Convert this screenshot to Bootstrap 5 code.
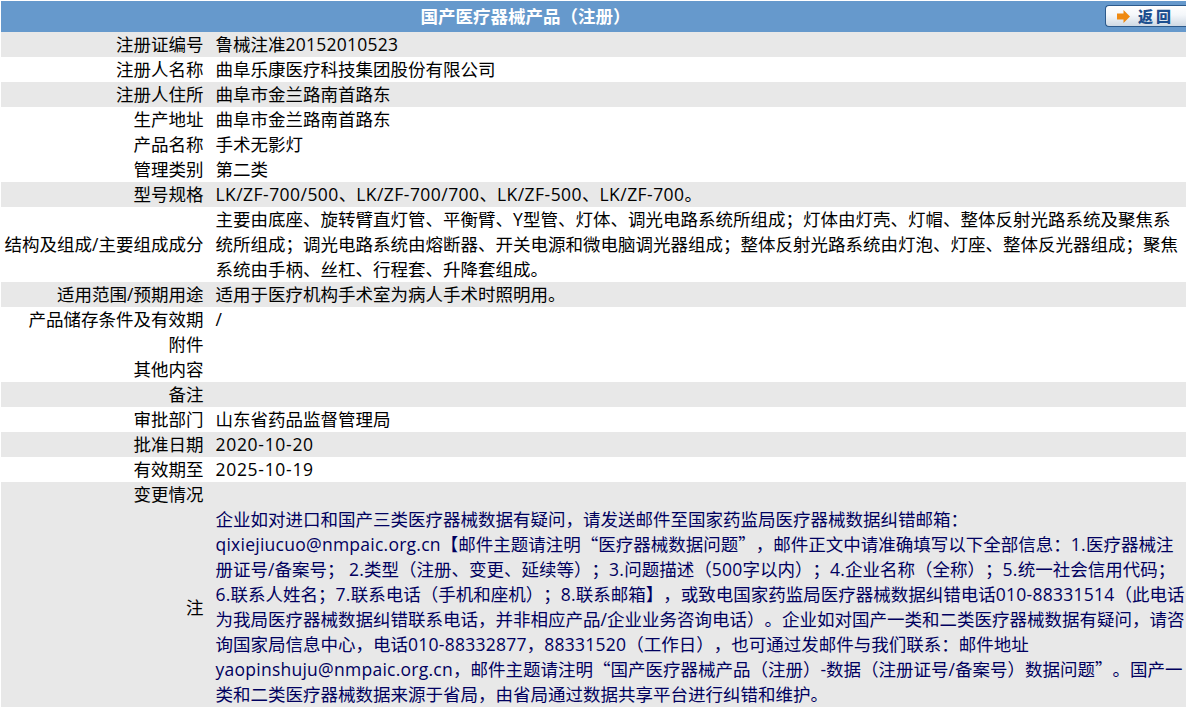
<!DOCTYPE html>
<html lang="zh-CN">
<head>
<meta charset="utf-8">
<title>国产医疗器械产品（注册）</title>
<link href="https://cdn.jsdelivr.net/npm/bootstrap@5.3.0/dist/css/bootstrap.min.css" rel="stylesheet">
<style>
html,body{height:707px;overflow:hidden;background:#fff}
body{font-family:"Open Sans","Noto Sans CJK SC",sans-serif;font-size:17.5px;color:#000;padding:1px 0 0 1px;text-spacing-trim:space-all}
.head-bar{background:#6699cc;height:31px}
.head-title{width:1049px;color:#fff;font-weight:700;font-size:17.5px;line-height:31px;text-align:center}
.back-btn{width:81px;height:22px;margin:4px 0 0 55px;padding:0 0 0 11px;border:1px solid #2c5a8c;border-right-width:0;border-radius:4px 0 0 4px;background:linear-gradient(#ffffff,#f4f7fa 45%,#cfd9e4);color:#1d4f8f;font-family:"Noto Sans CJK SC",serif;font-weight:900;font-size:15px;line-height:20px;letter-spacing:3px;gap:8px}
.info-table{width:1185px;table-layout:fixed;--bs-table-bg:transparent;--bs-table-color:#000}
.info-table td{padding:0;line-height:25px;font-size:17.5px;vertical-align:middle;border:0;white-space:nowrap}
.info-table .lab{width:206px;padding-right:3.5px;text-align:right}
.info-table .val{padding-left:8.5px}
.info-table .gr{--bs-table-bg:#e8e8e8}
.lat{letter-spacing:.25px}
.lat-wide{letter-spacing:.45px}
.lat-date{letter-spacing:.7px}
.cjk-q{font-family:"Noto Sans CJK SC",sans-serif;line-height:1}
.note-text{color:#00005e}
</style>
</head>
<body>
<div class="head-bar d-flex">
  <div class="head-title">国产医疗器械产品（注册）</div>
  <button type="button" class="back-btn d-flex align-items-center">
    <svg width="13" height="13" viewBox="0 0 13 13"><path d="M0 3.5H6.5V0L13 6.5 6.5 13V9.5H0Z" fill="#ef8a12"/></svg>
    <span>返回</span>
  </button>
</div>
<table class="table info-table mb-0">
<tbody>
<tr class="gr"><td class="lab">注册证编号</td><td class="val">鲁械注准<span class="lat">20152010523</span></td></tr>
<tr><td class="lab">注册人名称</td><td class="val">曲阜乐康医疗科技集团股份有限公司</td></tr>
<tr class="gr"><td class="lab">注册人住所</td><td class="val">曲阜市金兰路南首路东</td></tr>
<tr><td class="lab">生产地址</td><td class="val">曲阜市金兰路南首路东</td></tr>
<tr><td class="lab">产品名称</td><td class="val">手术无影灯</td></tr>
<tr><td class="lab">管理类别</td><td class="val">第二类</td></tr>
<tr class="gr"><td class="lab">型号规格</td><td class="val"><span class="lat-wide">LK/ZF-700/500</span>、<span class="lat-wide">LK/ZF-700/700</span>、<span class="lat-wide">LK/ZF-500</span>、<span class="lat-wide">LK/ZF-700</span>。</td></tr>
<tr><td class="lab">结构及组成/主要组成成分</td><td class="val">主要由底座、旋转臂直灯管、平衡臂、<span class="lat">Y</span>型管、灯体、调光电路系统所组成；灯体由灯壳、灯帽、整体反射光路系统及聚焦系<br>统所组成；调光电路系统由熔断器、开关电源和微电脑调光器组成；整体反射光路系统由灯泡、灯座、整体反光器组成；聚焦<br>系统由手柄、丝杠、行程套、升降套组成。</td></tr>
<tr class="gr"><td class="lab">适用范围/预期用途</td><td class="val">适用于医疗机构手术室为病人手术时照明用。</td></tr>
<tr><td class="lab">产品储存条件及有效期</td><td class="val">/</td></tr>
<tr><td class="lab">附件</td><td class="val"></td></tr>
<tr><td class="lab">其他内容</td><td class="val"></td></tr>
<tr class="gr"><td class="lab">备注</td><td class="val"></td></tr>
<tr><td class="lab">审批部门</td><td class="val">山东省药品监督管理局</td></tr>
<tr class="gr"><td class="lab">批准日期</td><td class="val"><span class="lat-date">2020-10-20</span></td></tr>
<tr><td class="lab">有效期至</td><td class="val"><span class="lat-date">2025-10-19</span></td></tr>
<tr class="gr"><td class="lab">变更情况</td><td class="val"></td></tr>
<tr class="gr"><td class="lab">注</td><td class="val note-text">企业如对进口和国产三类医疗器械数据有疑问，请发送邮件至国家药监局医疗器械数据纠错邮箱：<br><span class="lat">qixiejiucuo@nmpaic.org.cn</span>【邮件主题请注明<span class="cjk-q">“</span>医疗器械数据问题<span class="cjk-q">”</span>，邮件正文中请准确填写以下全部信息：<span class="lat">1.</span>医疗器械注<br>册证号/备案号； <span class="lat">2.</span>类型（注册、变更、延续等）；<span class="lat">3.</span>问题描述（<span class="lat">500</span>字以内）；<span class="lat">4.</span>企业名称（全称）；<span class="lat">5.</span>统一社会信用代码；<br><span class="lat">6.</span>联系人姓名；<span class="lat">7.</span>联系电话（手机和座机）；<span class="lat">8.</span>联系邮箱】，或致电国家药监局医疗器械数据纠错电话<span class="lat">010-88331514</span>（此电话<br>为我局医疗器械数据纠错联系电话，并非相应产品/企业业务咨询电话）。企业如对国产一类和二类医疗器械数据有疑问，请咨<br>询国家局信息中心，电话<span class="lat">010-88332877</span>，<span class="lat">88331520</span>（工作日），也可通过发邮件与我们联系：邮件地址<br><span class="lat">yaopinshuju@nmpaic.org.cn</span>，邮件主题请注明<span class="cjk-q">“</span>国产医疗器械产品（注册）-数据（注册证号/备案号）数据问题<span class="cjk-q">”</span>。国产一<br>类和二类医疗器械数据来源于省局，由省局通过数据共享平台进行纠错和维护。</td></tr>
</tbody>
</table>
<script src="https://cdn.jsdelivr.net/npm/bootstrap@5.3.0/dist/js/bootstrap.bundle.min.js"></script>
</body>
</html>
